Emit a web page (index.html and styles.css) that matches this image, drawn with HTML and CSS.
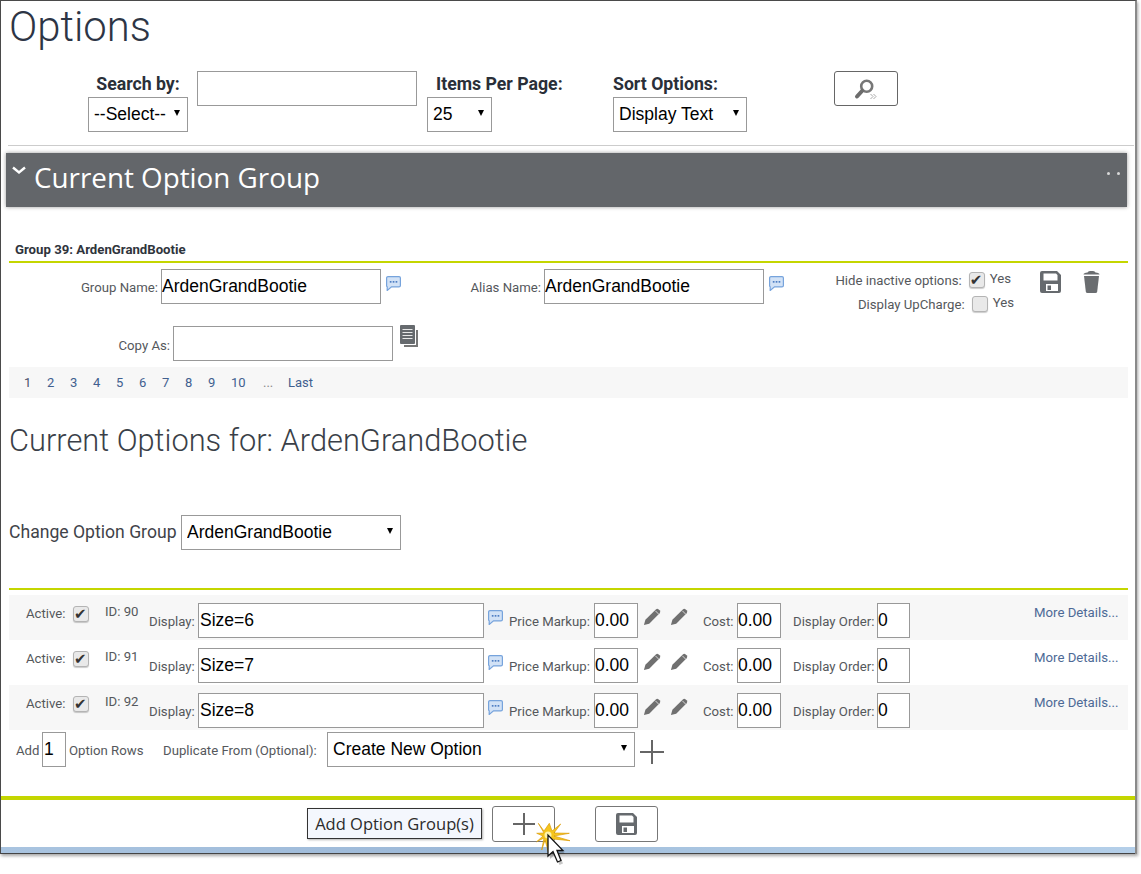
FILE: index.html
```html
<!DOCTYPE html>
<html lang="en">
<head>
<meta charset="utf-8">
<title>Options</title>
<link rel="stylesheet" href="styles.css">
</head>
<body>
<svg class="defs" aria-hidden="true">
  <symbol id="i-bubble" viewBox="0 0 15 15">
    <path d="M2 .6h11A1.400 1.400 0 0 1 14.400 2v7.500a1.400 1.400 0 0 1-1.400 1.400H5.500L1.200 14.500V10.800A1.400 1.400 0 0 1 .6 9.500V2A1.400 1.400 0 0 1 2 .6z" fill="#d2e2f6" stroke="#76a3dc" stroke-width="1.200"/>
    <rect x="3.800" y="5" width="1.700" height="1.700" fill="#4f7fc4"/><rect x="6.700" y="5" width="1.700" height="1.700" fill="#4f7fc4"/><rect x="9.600" y="5" width="1.700" height="1.700" fill="#4f7fc4"/>
  </symbol>
  <symbol id="i-pencil" viewBox="0 0 20 20">
    <path d="M1 19l1.500-5.500L13.500 2.500q1.500-1.500 3 0l1 1q1.500 1.500 0 3L6.500 17.500z" fill="#707070"/>
    <path d="M13 4l3.500 3.500" stroke="#f7f7f7" stroke-width=".8"/>
  </symbol>
  <symbol id="i-disk" viewBox="0 0 21 22">
    <path fill-rule="evenodd" d="M2 0h15l4 4v16a2 2 0 0 1-2 2H2a2 2 0 0 1-2-2V2a2 2 0 0 1 2-2zM3.500 2.500v7h14V4L16 2.500zM6 13v7h12v-7z" fill="#666a6e"/>
    <rect x="7.500" y="14.500" width="3.500" height="4.500" fill="#666a6e"/>
  </symbol>
</svg>

<div class="frame">
  <h1 class="title">Options</h1>

  <form class="search-row">
    <div class="col col-search">
      <label class="head-label center">Search by:</label>
      <div class="sel w100"><select class="ctl"><option>--Select--</option></select></div>
    </div>
    <input class="ctl text-input w220 search-input" type="text">
    <div class="col col-items">
      <label class="head-label indent">Items Per Page:</label>
      <div class="sel w65"><select class="ctl"><option>25</option></select></div>
    </div>
    <div class="col col-sort">
      <label class="head-label">Sort Options:</label>
      <div class="sel w134"><select class="ctl"><option>Display Text</option></select></div>
    </div>
    <button class="icon-btn search-btn" type="button" aria-label="Search">
      <svg width="26" height="24" viewBox="0 0 26 24">
        <circle cx="13.700" cy="9.200" r="5.500" fill="none" stroke="#777" stroke-width="2.600"/>
        <path d="M9 14l-5 5.500" stroke="#6c6c6c" stroke-width="4" stroke-linecap="round"/>
        <path d="M17.500 17l2.500 2.500-2.500 2.500M20.500 17l2.500 2.500-2.500 2.500" fill="none" stroke="#aaa"/>
      </svg>
    </button>
  </form>

  <hr class="rule">

  <div class="bar">
    <svg class="chev" width="14" height="9" viewBox="0 0 14 9"><path d="M1 1.500l6 5 6-5" fill="none" stroke="#fff" stroke-width="2.400"/></svg>
    <span class="bar-title">Current Option Group</span>
    <span class="dots"><i></i><i></i></span>
  </div>

  <div class="group-label">Group 39: ArdenGrandBootie</div>
  <div class="green"></div>

  <div class="field-row">
    <label class="lbl group-lbl">Group Name:</label>
    <input class="ctl text-input w220 gap3" type="text" value="ArdenGrandBootie">
    <svg class="bubble" width="15" height="15"><use href="#i-bubble"/></svg>
    <label class="lbl alias-lbl">Alias Name:</label>
    <input class="ctl text-input w220 gap3" type="text" value="ArdenGrandBootie">
    <svg class="bubble" width="15" height="15"><use href="#i-bubble"/></svg>
    <div class="flags">
      <div class="flag flag-a"><span class="lbl">Hide inactive options:</span><input class="check" type="checkbox" checked><span class="lbl yes">Yes</span></div>
      <div class="flag"><span class="lbl">Display UpCharge:</span><input class="check" type="checkbox"><span class="lbl yes">Yes</span></div>
    </div>
    <svg class="disk" width="21" height="22"><use href="#i-disk"/></svg>
    <svg class="trash" width="17" height="22" viewBox="0 0 17 22">
      <path d="M4.500 1.500Q5 0 7 0h3q2 0 2.500 1.500Q16.500 2 16.500 3.500H.5Q.5 2 4.500 1.500z" fill="#6a6d70"/>
      <path d="M1 5h15l-1.800 15.500q-.2 1.500-1.700 1.500h-8q-1.500 0-1.700-1.500z" fill="#6a6d70"/>
    </svg>
  </div>

  <div class="copy-row">
    <label class="lbl copy-lbl">Copy As:</label>
    <input class="ctl text-input w220 gap3" type="text">
    <svg class="copy-icon" width="18" height="22" viewBox="0 0 18 22">
      <path d="M16 5h2v17H4v-2h12z" fill="#777"/>
      <rect width="15" height="19" rx="1" fill="#666a6e"/>
      <path d="M2.500 4.500h10M2.500 7.500h10M2.500 10.500h10M2.500 13.500h10" stroke="#e8e8e8" stroke-width="1"/>
    </svg>
  </div>

  <nav class="pager">
    <a class="pg current">1</a><a class="pg">2</a><a class="pg">3</a><a class="pg">4</a><a class="pg">5</a><a class="pg">6</a><a class="pg">7</a><a class="pg">8</a><a class="pg">9</a><a class="pg pg-10">10</a><span class="pg pg-more">...</span><a class="pg">Last</a>
  </nav>

  <h2 class="subtitle">Current Options for: ArdenGrandBootie</h2>

  <div class="change-row">
    <label class="change-lbl">Change Option Group</label>
    <div class="sel w220"><select class="ctl"><option>ArdenGrandBootie</option></select></div>
  </div>

  <div class="green green-options"></div>

  <div class="opt-row shaded">
    <label class="lbl o-active">Active:</label><input class="check o-check" type="checkbox" checked><span class="lbl o-id">ID: 90</span>
    <label class="lbl o-display">Display:</label><input class="ctl text-input o-text" type="text" value="Size=6">
    <svg class="o-bubble" width="15" height="15"><use href="#i-bubble"/></svg>
    <label class="lbl o-price">Price Markup:</label><input class="ctl text-input w44" type="text" value="0.00">
    <svg class="o-pen" width="19" height="19"><use href="#i-pencil"/></svg><svg class="o-pen o-pen2" width="19" height="19"><use href="#i-pencil"/></svg>
    <label class="lbl o-cost">Cost:</label><input class="ctl text-input w44" type="text" value="0.00">
    <label class="lbl o-order">Display Order:</label><input class="ctl text-input w33" type="text" value="0">
    <a class="o-more">More Details...</a>
  </div>
  <div class="opt-row">
    <label class="lbl o-active">Active:</label><input class="check o-check" type="checkbox" checked><span class="lbl o-id">ID: 91</span>
    <label class="lbl o-display">Display:</label><input class="ctl text-input o-text" type="text" value="Size=7">
    <svg class="o-bubble" width="15" height="15"><use href="#i-bubble"/></svg>
    <label class="lbl o-price">Price Markup:</label><input class="ctl text-input w44" type="text" value="0.00">
    <svg class="o-pen" width="19" height="19"><use href="#i-pencil"/></svg><svg class="o-pen o-pen2" width="19" height="19"><use href="#i-pencil"/></svg>
    <label class="lbl o-cost">Cost:</label><input class="ctl text-input w44" type="text" value="0.00">
    <label class="lbl o-order">Display Order:</label><input class="ctl text-input w33" type="text" value="0">
    <a class="o-more">More Details...</a>
  </div>
  <div class="opt-row shaded">
    <label class="lbl o-active">Active:</label><input class="check o-check" type="checkbox" checked><span class="lbl o-id">ID: 92</span>
    <label class="lbl o-display">Display:</label><input class="ctl text-input o-text" type="text" value="Size=8">
    <svg class="o-bubble" width="15" height="15"><use href="#i-bubble"/></svg>
    <label class="lbl o-price">Price Markup:</label><input class="ctl text-input w44" type="text" value="0.00">
    <svg class="o-pen" width="19" height="19"><use href="#i-pencil"/></svg><svg class="o-pen o-pen2" width="19" height="19"><use href="#i-pencil"/></svg>
    <label class="lbl o-cost">Cost:</label><input class="ctl text-input w44" type="text" value="0.00">
    <label class="lbl o-order">Display Order:</label><input class="ctl text-input w33" type="text" value="0">
    <a class="o-more">More Details...</a>
  </div>

  <div class="add-row">
    <label class="lbl a-add">Add</label><input class="ctl text-input a-count" type="text" value="1">
    <label class="lbl a-rows">Option Rows</label>
    <label class="lbl a-dup">Duplicate From (Optional):</label>
    <div class="sel w308"><select class="ctl"><option>Create New Option</option></select></div>
    <svg class="a-plus" width="24" height="24" viewBox="0 0 24 24"><path d="M12 0v24M0 12h24" stroke="#666" stroke-width="2"/></svg>
  </div>

  <div class="footer-line"></div>
  <div class="footer">
    <div class="tooltip">Add Option Group(s)</div>
    <button class="icon-btn foot-btn" type="button" aria-label="Add"><svg width="24" height="24" viewBox="0 0 24 24"><path d="M12 1v22M1 12h22" stroke="#666" stroke-width="2"/></svg></button>
    <button class="icon-btn foot-btn foot-save" type="button" aria-label="Save"><svg width="21" height="22"><use href="#i-disk"/></svg></button>
  </div>
  <div class="strip"></div>

  <svg class="cursor" width="42" height="46" viewBox="0 0 42 46">
    <path d="M5.300 .3L11 8 16.300 .3 19 8 27.700 1 21 10 36.300 10.300 21 13 37 17.700 20 16 21 24 15 16 15.300 28.700 12 17 8.700 27 11 15 3.700 18.700 10 13 3.700 10.300 11 10z" fill="#f5c51c" stroke="#dd9d0c" stroke-width=".7"/>
    <circle cx="15" cy="12" r="3.500" fill="#fff2a8"/>
    <path d="M17 15V36L22 31.500 26.500 42 30 40.500 26 30.500H32z" fill="#000" opacity=".22"/>
    <path d="M15 12V33L20 28.500 24.500 39 28 37.500 24 27.500H30z" fill="#fff" stroke="#111" stroke-width="1.300"/>
  </svg>
</div>
</body>
</html>
```

FILE: styles.css
```css
* { box-sizing: border-box; }
html, body { margin: 0; padding: 0; background: #fff; }
body { min-height: 874px; font-family: Roboto, "Liberation Sans", sans-serif; }
.defs { position: absolute; width: 0; height: 0; }

.frame {
  position: relative;
  width: 1137px;
  height: 854px;
  padding-left: 8px;
  border-top: 1px solid #4a4a4a;
  border-left: 1px solid #4a4a4a;
  border-right: 2px solid #8a8a8a;
  box-shadow: 1px 2px 3px rgba(0, 0, 0, .35);
}

.title {
  margin: 0;
  height: 50px;
  font-weight: 300;
  font-size: 41.800px;
  line-height: 52px;
  color: #2d3545;
}

/* form controls */
.ctl {
  display: block;
  height: 35px;
  margin: 0;
  background: #fff;
  border: 1px solid #999;
  border-radius: 0;
  outline: none;
  color: #000;
  font-family: "Liberation Sans", Arial, sans-serif;
  font-size: 17.500px;
}
.text-input { padding: 0 0 1px; }
.sel { position: relative; }
.sel select { width: 100%; padding: 0 4px 2px 5px; appearance: none; -webkit-appearance: none; }
.sel::after {
  content: "";
  position: absolute;
  right: 8px;
  top: 13px;
  border-left: 3px solid transparent;
  border-right: 3px solid transparent;
  border-top: 6px solid #000;
}
.w33 { width: 33px; }
.w44 { width: 44px; }
.w65 { width: 65px; }
.w100 { width: 100px; }
.w134 { width: 134px; }
.w220 { width: 220px; }
.w308 { width: 308px; }
.gap3 { margin-left: 3px; }

.search-row { display: flex; align-items: flex-start; margin-top: 20px; height: 61px; }
.col { display: flex; flex-direction: column; }
.col-search { width: 100px; margin-left: 79px; }
.search-input { margin-left: 9px; }
.col-items { width: 140px; margin-left: 10px; }
.col-sort { width: 134px; margin-left: 46px; }
.head-label {
  height: 26px;
  font-size: 17.700px;
  font-weight: 700;
  line-height: 26px;
  color: #2a2f38;
  white-space: nowrap;
}
.center { text-align: center; }
.indent { padding-left: 9px; }

.icon-btn {
  display: flex;
  align-items: center;
  justify-content: center;
  padding: 0;
  background: #fff;
  border: 1px solid #666;
  border-radius: 3px;
}
.search-btn { width: 64px; height: 35px; margin-left: 87px; }

.rule { height: 1px; margin: 13px 1px 0 -1px; border: 0; background: #ccc; }

.bar {
  position: relative;
  display: flex;
  width: 1121px;
  height: 54px;
  margin: 7px 0 0 -3px;
  background: #63666a;
  box-shadow: 0 0 4px rgba(0, 0, 0, .4);
}
.chev { position: absolute; left: 6px; top: 13px; }
.bar-title {
  margin-left: 28px;
  font-family: "Open Sans", sans-serif;
  font-size: 27.800px;
  line-height: 48px;
  color: #fff;
}
.dots { position: absolute; right: 7px; top: 19px; display: flex; gap: 7px; }
.dots i { width: 3px; height: 3px; border-radius: 50%; background: #d8d8d8; }

.group-label {
  margin: 35px 0 0 6px;
  height: 16px;
  font-size: 13.200px;
  font-weight: 700;
  line-height: 16px;
  color: #2f343c;
}
.green { width: 1119px; height: 2px; margin-top: 3px; background: #c4d600; }

.lbl {
  font-size: 13.200px;
  line-height: 16px;
  color: #55585c;
  white-space: nowrap;
}

.field-row { display: flex; align-items: flex-start; margin-top: 6px; height: 35px; }
.group-lbl { width: 149px; margin-top: 11px; text-align: right; }
.alias-lbl { width: 140px; margin-top: 11px; text-align: right; }
.bubble { flex: none; margin: 7px 0 0 5px; }
.flags { width: 230px; margin-top: 2px; }
.flag { display: flex; justify-content: flex-end; align-items: flex-start; height: 24px; }
.flag-a { margin-right: 3px; }
.flag .lbl:first-child { margin-top: 2px; }
.flag .yes { margin-left: 5px; margin-top: 0; }
.check {
  position: relative;
  flex: none;
  width: 16px;
  height: 16px;
  margin: 1px 0 0 7px;
  appearance: none;
  -webkit-appearance: none;
  background: #e9e9e9;
  border: 1px solid #b4b4b4;
  border-radius: 3px;
  box-shadow: 0 1px 1px rgba(0, 0, 0, .2);
}
.check:checked::after {
  content: "\2714";
  position: absolute;
  left: 0;
  top: -1px;
  font-family: "DejaVu Sans", sans-serif;
  font-size: 15px;
  line-height: 16px;
  color: #333;
}
.disk { flex: none; margin: 2px 0 0 26px; }
.trash { flex: none; margin: 2px 0 0 22px; }

.copy-row { display: flex; align-items: flex-start; margin-top: 22px; height: 35px; }
.copy-lbl { width: 161px; margin-top: 12px; text-align: right; }
.copy-icon { flex: none; margin: -1px 0 0 7px; }

.pager {
  display: flex;
  align-items: center;
  width: 1119px;
  height: 31px;
  margin-top: 6px;
  padding-left: 15px;
  background: #f7f7f7;
  font-size: 13px;
}
.pg { width: 23px; color: #41608f; }
.current { color: #4b4f6b; }
.pg-10 { width: 32px; }
.pg-more { width: 25px; color: #8a8a8a; }

.subtitle {
  margin: 23px 0 0;
  height: 40px;
  font-weight: 300;
  font-size: 30.800px;
  line-height: 40px;
  color: #3a3f48;
}

.change-row { display: flex; align-items: center; margin-top: 54px; }
.change-lbl { width: 172px; padding-bottom: 2px; font-size: 17.600px; color: #3f4349; white-space: nowrap; }
.green-options { margin-top: 38px; }

.opt-row {
  display: flex;
  align-items: flex-start;
  width: 1119px;
  height: 45px;
  padding-left: 16px;
}
.shaded { background: #f7f7f7; }
.green-options + .opt-row { margin-top: 5px; }
.opt-row .ctl { margin-top: 8px; }
.o-active { width: 48px; margin-top: 11px; padding-left: 1px; }
.opt-row .o-check { margin: 11px 0 0; }
.o-id { width: 44px; margin: 9px 0 0 16px; }
.o-display { width: 49px; margin-top: 19px; }
.o-text { width: 286px; padding-left: 1px; }
.o-bubble { flex: none; margin: 15px 0 0 4px; }
.o-price { width: 85px; margin: 19px 0 0 6px; }
.o-pen { flex: none; margin: 12px 0 0 5px; }
.o-pen2 { margin-left: 8px; }
.o-cost { width: 34px; margin: 19px 0 0 14px; }
.o-order { width: 84px; margin: 19px 0 0 12px; }
.o-more {
  margin: 10px 0 0 124px;
  font-size: 13.200px;
  line-height: 16px;
  color: #4d6a96;
  white-space: nowrap;
}

.add-row { display: flex; align-items: flex-start; height: 35px; margin-top: 2px; padding-left: 7px; }
.a-add { width: 26px; margin-top: 11px; }
.a-count { width: 24px; padding-left: 1px; }
.a-rows { width: 94px; margin: 11px 0 0 3px; }
.a-dup { width: 164px; margin-top: 11px; }
.a-plus { flex: none; margin: 8px 0 0 5px; }

.footer-line { width: 1134px; height: 4px; margin: 29px 0 0 -8px; background: #c4d600; }
.footer { display: flex; align-items: flex-start; height: 47px; margin-left: 298px; }
.tooltip {
  width: 175px;
  height: 31px;
  margin-top: 8px;
  border: 1px solid #333;
  background: #f4f7fd;
  box-shadow: 1px 1px 2px rgba(0, 0, 0, .3);
  font-family: "Open Sans", sans-serif;
  font-size: 16.500px;
  line-height: 29px;
  text-align: center;
  color: #2b2b2b;
}
.foot-btn { width: 63px; height: 36px; margin: 6px 0 0 10px; border-color: #777; }
.foot-save { margin-left: 40px; }

.strip {
  width: 1134px;
  height: 6px;
  margin-left: -8px;
  background: linear-gradient(90deg, #a9c4e0, #9db9d8 40%, #a8c4e0 60%, #b4cfe9);
  box-shadow: 0 1px 0 #444;
}

.cursor {
  position: absolute;
  left: 532px;
  top: 822px;
  z-index: 5;
}
```
